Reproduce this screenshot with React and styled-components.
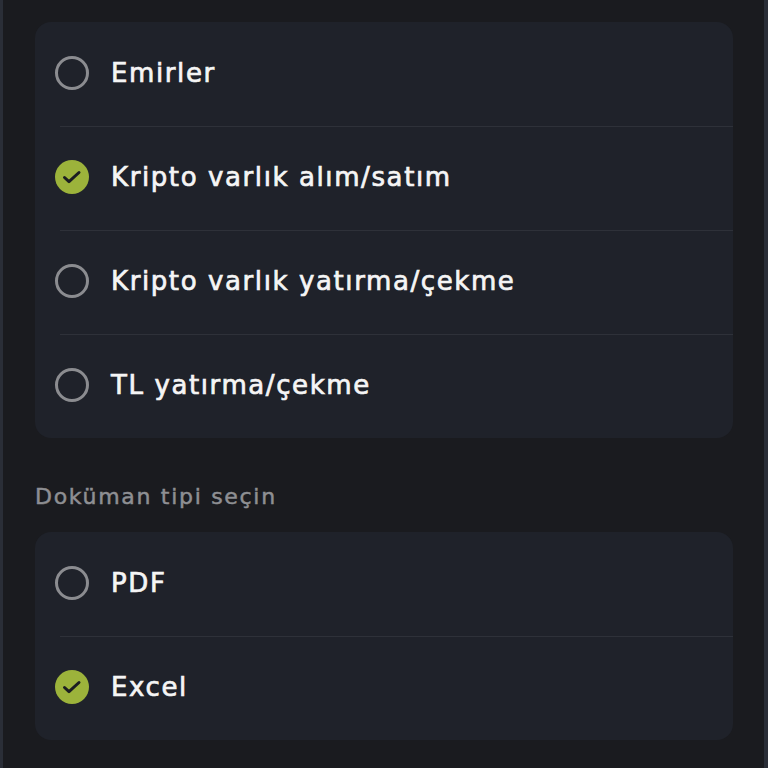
import React, { useState } from "react";
import styled, { createGlobalStyle } from "styled-components";

const GlobalStyle = createGlobalStyle`
  html, body {
    margin: 0;
    padding: 0;
    background: #1a1b1f;
  }
  * { box-sizing: border-box; }
`;

const Page = styled.div`
  width: 768px;
  height: 768px;
  overflow: hidden;
  background: #1a1b1f;
  border-left: 3px solid #2a2e37;
  border-right: 4px solid #2a2e37;
  padding: 22px 31px 0 32px;
  display: flex;
  flex-direction: column;
  font-family: "DejaVu Sans", Inter, sans-serif;
`;

const Card = styled.div`
  background: #1f222a;
  border-radius: 16px;
  display: flex;
  flex-direction: column;
  overflow: hidden;
`;

const Row = styled.button`
  all: unset;
  box-sizing: border-box;
  cursor: pointer;
  height: 104px;
  padding: 0 0 3px 20px;
  display: flex;
  align-items: center;
  gap: 22px;
  position: relative;
  & + &::before {
    content: "";
    position: absolute;
    top: 0;
    left: 25px;
    right: 0;
    height: 1px;
    background: #2e3139;
  }
`;

const Label = styled.span`
  color: #f5f5f5;
  font-size: 26px;
  -webkit-text-stroke: 0.7px #f5f5f5;
  letter-spacing: 1.6px;
`;

const Ring = styled.span`
  width: 34px;
  height: 34px;
  border-radius: 50%;
  flex-shrink: 0;
  display: flex;
  align-items: center;
  justify-content: center;
  border: ${({ $on }) => ($on ? "none" : "3px solid #8b8c90")};
  background: ${({ $on }) => ($on ? "#9cb33b" : "transparent")};
`;

const Section = styled.div`
  color: #8e8f93;
  font-size: 22px;
  line-height: 26px;
  letter-spacing: 1.7px;
  -webkit-text-stroke: 0.5px #8e8f93;
  margin: 46px 0 22px 0;
`;

const Check = () => (
  <svg width="34" height="34" viewBox="0 0 34 34" fill="none">
    <path
      d="M9.5 17.5l4.5 4.2L24 12.5"
      stroke="#1b1d22"
      strokeWidth="3"
      strokeLinecap="round"
      strokeLinejoin="round"
    />
  </svg>
);

const OptionList = ({ options, selected, onPick }) => (
  <Card>
    {options.map((o) => (
      <Row key={o} onClick={() => onPick(o)}>
        <Ring $on={selected === o}>{selected === o && <Check />}</Ring>
        <Label>{o}</Label>
      </Row>
    ))}
  </Card>
);

export default function App() {
  const [type, setType] = useState("Kripto varlık alım/satım");
  const [doc, setDoc] = useState("Excel");

  return (
    <>
      <GlobalStyle />
      <Page>
        <OptionList
          options={[
            "Emirler",
            "Kripto varlık alım/satım",
            "Kripto varlık yatırma/çekme",
            "TL yatırma/çekme",
          ]}
          selected={type}
          onPick={setType}
        />
        <Section>Doküman tipi seçin</Section>
        <OptionList options={["PDF", "Excel"]} selected={doc} onPick={setDoc} />
      </Page>
    </>
  );
}
